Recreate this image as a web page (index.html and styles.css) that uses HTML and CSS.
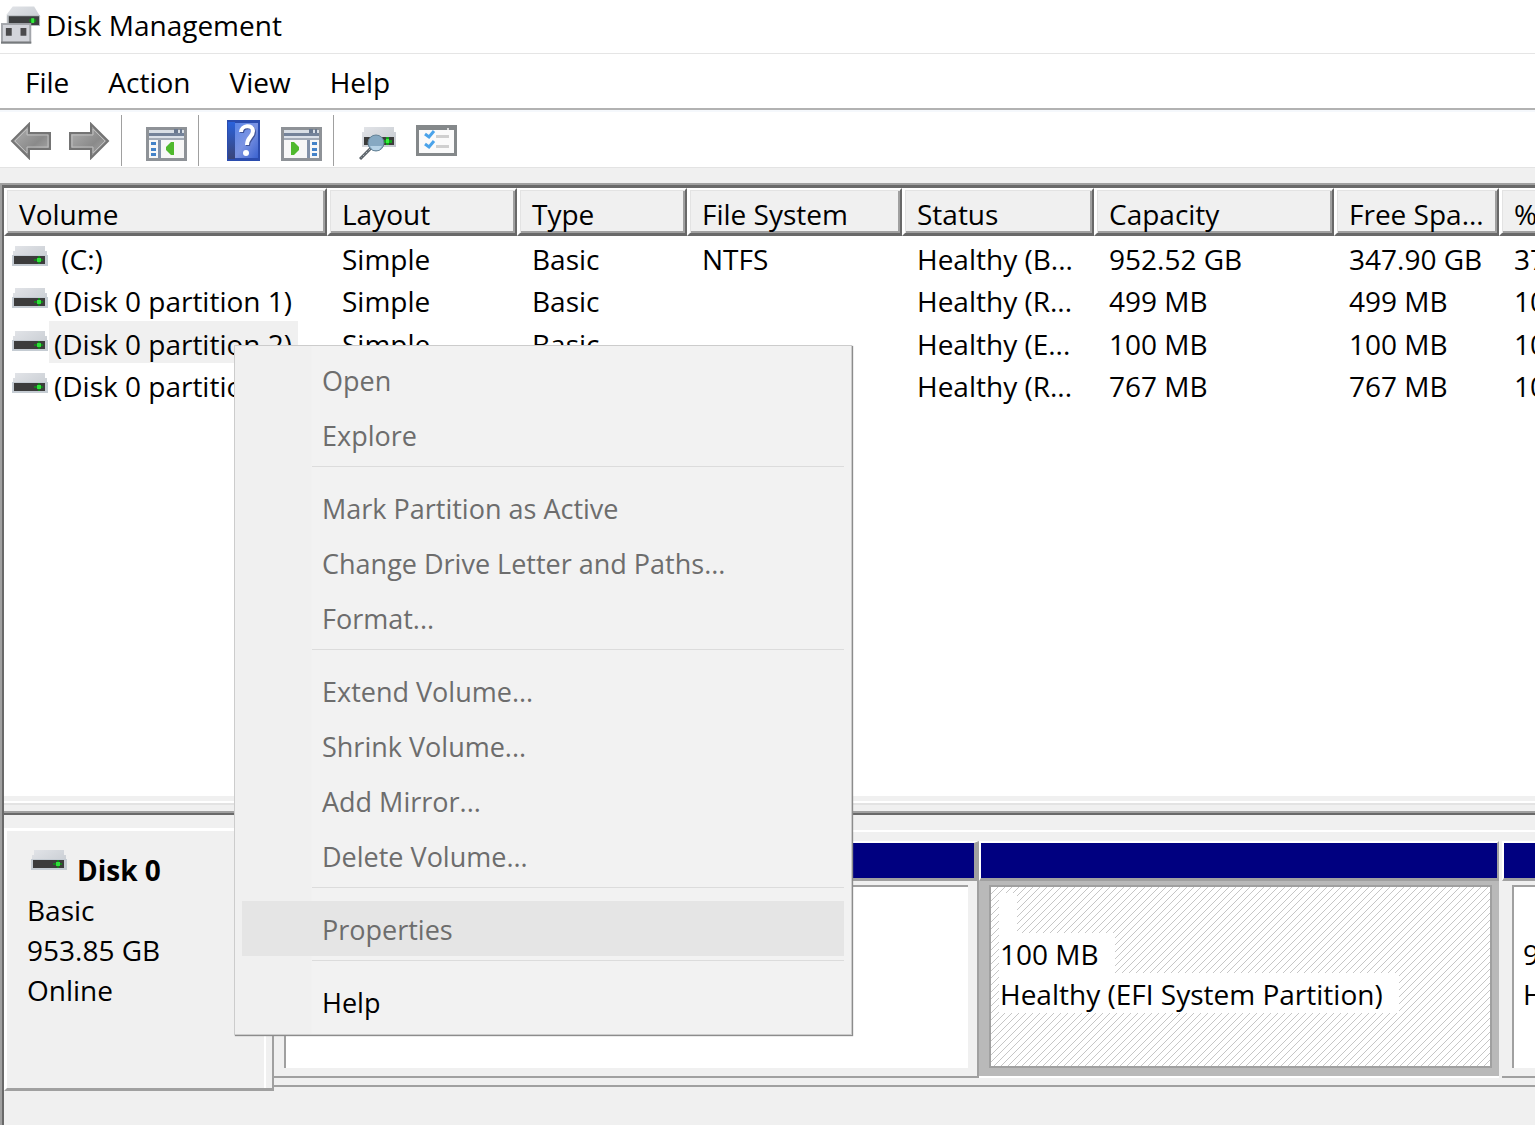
FILE: index.html
```html
<!DOCTYPE html>
<html lang="en">
<head>
  <meta charset="UTF-8" />
  <meta name="viewport" content="width=device-width, initial-scale=1.0" />
  <title>Disk Management</title>
  <link rel="stylesheet" href="styles.css">
</head>
<body>
  <!-- shared icons -->
  <svg class="defs" width="0" height="0">
    <defs>
      <linearGradient id="metal" x1="0" y1="0" x2="1" y2="1">
        <stop offset="0" stop-color="#e2e4e8"/>
        <stop offset="1" stop-color="#c3c8ce"/>
      </linearGradient>
      <linearGradient id="arrow" x1="0" y1="0" x2="1" y2="1">
        <stop offset="0" stop-color="#b4b4b4"/>
        <stop offset="0.6" stop-color="#8a8a8a"/>
        <stop offset="1" stop-color="#b0b0b0"/>
      </linearGradient>
      <linearGradient id="book" x1="0" y1="0" x2="1" y2="1">
        <stop offset="0" stop-color="#5b86e8"/>
        <stop offset="0.5" stop-color="#7b93e2"/>
        <stop offset="1" stop-color="#3a62cf"/>
      </linearGradient>
      <linearGradient id="spine" x1="0" y1="0" x2="0" y2="1">
        <stop offset="0" stop-color="#2a62dc"/>
        <stop offset="1" stop-color="#3a4478"/>
      </linearGradient>
    </defs>
    <symbol id="drive" viewBox="0 0 36 21">
      <path d="M3 0h30v5h2v15H1V5h2z" fill="url(#metal)"/>
      <path d="M0 9h36v11H0z" fill="#c5ccd3"/>
      <path d="M2 10h31v8H2z" fill="#3c3c3c"/>
      <path d="M22 13h9v2h-9z" fill="#14801c"/>
      <path d="M26 10h2v8h-2z" fill="#14801c"/>
      <path d="M25 12h4v4h-4z" fill="#2fe03a"/>
    </symbol>
    <symbol id="window" viewBox="0 0 41 34">
      <path d="M0 0h41v34H0z" fill="#8e9297"/>
      <path d="M3 3h35v3H3z" fill="#d9dfe6"/>
      <path d="M28 2h4v4h-4zM34 2h2v4h-2z" fill="#69788f"/>
      <path d="M3 6h35v3H3z" fill="#74839a"/>
      <path d="M3 9h35v2H3z" fill="#dce2ea"/>
      <path d="M3 11h35v2H3z" fill="#a3abb7"/>
      <path d="M3 13h35v18H3z" fill="#f7f7f7"/>
    </symbol>
  </svg>

  <header class="titlebar">
    <svg class="app-icon" viewBox="0 0 41 38">
      <path d="M12 0h22l6 10v9H6V8z" fill="url(#metal)"/>
      <path d="M6 9h34v11H6z" fill="#b8bcc0"/>
      <path d="M8 10h31v9H8z" fill="#3d3f40"/>
      <path d="M29 13h7v3h-7z" fill="#14801c"/>
      <path d="M31 12h3v5h-3z" fill="#35e83d"/>
      <path d="M0 17h31v21H0z" fill="#a3a6ab"/>
      <path d="M2 19h27v17H2z" fill="#d2d4da"/>
      <path d="M5 22h6v8H5zM20 22h6v8h-6z" fill="#4a4a4c"/>
      <path d="M0 36h31v2H0z" fill="#777a7d"/>
    </svg>
    <h1>Disk Management</h1>
  </header>

  <nav class="menubar">
    <button type="button">File</button>
    <button type="button">Action</button>
    <button type="button">View</button>
    <button type="button">Help</button>
  </nav>

  <div class="toolbar">
    <button type="button" aria-label="Back">
      <svg width="42" height="38" viewBox="0 0 42 38">
        <path d="M2 19L19 2v9h21v16H19v9z" fill="url(#arrow)" stroke="#747474" stroke-width="2"/>
        <path d="M5 19L17 7v6h21v12H17v6z" fill="none" stroke="#bdbdbd" stroke-width="1"/>
      </svg>
    </button>
    <button type="button" aria-label="Forward">
      <svg width="42" height="38" viewBox="0 0 42 38">
        <path d="M40 19L23 2v9H2v16h21v9z" fill="url(#arrow)" stroke="#747474" stroke-width="2"/>
        <path d="M37 19L25 7v6H4v12h21v6z" fill="none" stroke="#bdbdbd" stroke-width="1"/>
      </svg>
    </button>
    <span class="divider"></span>
    <button type="button" class="low" aria-label="Show/Hide Console Tree">
      <svg width="41" height="34" viewBox="0 0 41 34">
        <use href="#window" width="41" height="34"/>
        <path d="M12 13h3v18h-3z" fill="#8291a8"/>
        <path d="M5 15h5v3H5zM5 21h5v3H5zM5 26h5v3H5z" fill="#4382c8"/>
        <path d="M28 15v13h-3l-5-5v-3l5-5z" fill="#4fb92d"/>
      </svg>
    </button>
    <span class="divider"></span>
    <button type="button" aria-label="Help">
      <svg width="33" height="41" viewBox="0 0 33 41">
        <path d="M0 0h33v41H0z" fill="#2b4cae"/>
        <path d="M1 2h7v37H1z" fill="url(#spine)"/>
        <path d="M8 3h23v35H8z" fill="url(#book)"/>
        <path d="M14 12c0-7 12-8 12-1 0 6-6 6-6 14" fill="none" stroke="#405397" stroke-width="4" transform="translate(1 1)"/>
        <path d="M14 12c0-7 12-8 12-1 0 6-6 6-6 14" fill="none" stroke="#fff" stroke-width="4"/>
        <circle cx="19" cy="33" r="3" fill="#fff"/>
      </svg>
    </button>
    <button type="button" class="low" aria-label="Show/Hide Action Pane">
      <svg width="41" height="34" viewBox="0 0 41 34">
        <use href="#window" width="41" height="34"/>
        <path d="M26 13h3v18h-3z" fill="#8291a8"/>
        <path d="M31 15h5v3h-5zM31 21h5v3h-5zM31 26h5v3h-5z" fill="#4382c8"/>
        <path d="M10 15v13h3l5-5v-3l-5-5z" fill="#4fb92d"/>
      </svg>
    </button>
    <span class="divider"></span>
    <button type="button" class="low" aria-label="Rescan Disks">
      <svg width="38" height="34" viewBox="0 0 38 34">
        <path d="M5 0h30v5h2v15H3V5h2z" fill="url(#metal)"/>
        <path d="M5 10h30v8H5z" fill="#3c3c3c"/>
        <path d="M24 13h9v3h-9zM27 10h3v8h-3z" fill="#14a01c"/>
        <path d="M27 12h3v4h-3z" fill="#35f03d"/>
        <path d="M12 21L1 32" stroke="#5b6268" stroke-width="3"/>
        <path d="M11 22L2 31" stroke="#b5bcc2" stroke-width="1" stroke-dasharray="2 2"/>
        <circle cx="17" cy="16" r="8" fill="#86a9c2" stroke="#658397" stroke-width="1"/>
        <path d="M11 19h12l-3 4h-6z" fill="#b6d3e6"/>
      </svg>
    </button>
    <button type="button" aria-label="Settings">
      <svg width="41" height="31" viewBox="0 0 41 31">
        <path d="M0 0h41v31H0z" fill="#84888a"/>
        <path d="M3 5h35v23H3z" fill="#fafafa"/>
        <path d="M31 3h2v2h-2z" fill="#ddd"/>
        <path d="M9 9l4 3 5-6M9 19l4 3 5-6" fill="none" stroke="#4aa3ea" stroke-width="3"/>
        <path d="M20 10h13v3H20zM20 20h13v3H20z" fill="#cfcfcf"/>
      </svg>
    </button>
  </div>

  <main class="console">
    <section class="volume-list">
      <table>
        <colgroup>
          <col class="c-volume"><col class="c-layout"><col class="c-type"><col class="c-fs">
          <col class="c-status"><col class="c-capacity"><col class="c-free"><col class="c-pct">
        </colgroup>
        <thead>
          <tr>
            <th>Volume</th><th>Layout</th><th>Type</th><th>File System</th>
            <th>Status</th><th>Capacity</th><th>Free Spa...</th><th>% Free</th>
          </tr>
        </thead>
        <tbody>
          <tr>
            <td><div class="name"><svg class="drive"><use href="#drive"/></svg><span>&nbsp;(C:)</span></div></td>
            <td>Simple</td><td>Basic</td><td>NTFS</td><td>Healthy (B...</td><td>952.52 GB</td><td>347.90 GB</td><td>37 %</td>
          </tr>
          <tr>
            <td><div class="name"><svg class="drive"><use href="#drive"/></svg><span>(Disk 0 partition 1)</span></div></td>
            <td>Simple</td><td>Basic</td><td></td><td>Healthy (R...</td><td>499 MB</td><td>499 MB</td><td>100 %</td>
          </tr>
          <tr>
            <td><div class="name"><svg class="drive"><use href="#drive"/></svg><span class="selected">(Disk 0 partition 2)</span></div></td>
            <td>Simple</td><td>Basic</td><td></td><td>Healthy (E...</td><td>100 MB</td><td>100 MB</td><td>100 %</td>
          </tr>
          <tr>
            <td><div class="name"><svg class="drive"><use href="#drive"/></svg><span>(Disk 0 partition 5)</span></div></td>
            <td>Simple</td><td>Basic</td><td></td><td>Healthy (R...</td><td>767 MB</td><td>767 MB</td><td>100 %</td>
          </tr>
        </tbody>
      </table>
    </section>

    <div class="splitter"></div>

    <section class="disks">
      <div class="disk-info">
        <h2><svg class="drive"><use href="#drive"/></svg>Disk 0</h2>
        <p>Basic</p>
        <p>953.85 GB</p>
        <p>Online</p>
      </div>
      <div class="partitions">
        <div class="partition recovery">
          <div class="stripe"></div>
          <div class="body"><div class="inner"></div></div>
        </div>
        <div class="partition efi">
          <div class="stripe"></div>
          <div class="body"><div class="inner">
            <p><span></span></p>
            <p><span>100 MB</span></p>
            <p><span>Healthy (EFI System Partition)</span></p>
          </div></div>
        </div>
        <div class="partition system">
          <div class="stripe"></div>
          <div class="body"><div class="inner">
            <p><span></span></p>
            <p><span>952.52 GB NTFS</span></p>
            <p><span>Healthy (Boot)</span></p>
          </div></div>
        </div>
      </div>
    </section>
  </main>

  <div class="context-menu">
    <button type="button" disabled>Open</button>
    <button type="button" disabled>Explore</button>
    <hr>
    <button type="button" disabled>Mark Partition as Active</button>
    <button type="button" disabled>Change Drive Letter and Paths...</button>
    <button type="button" disabled>Format...</button>
    <hr>
    <button type="button" disabled>Extend Volume...</button>
    <button type="button" disabled>Shrink Volume...</button>
    <button type="button" disabled>Add Mirror...</button>
    <button type="button" disabled>Delete Volume...</button>
    <hr>
    <button type="button" class="hover" disabled>Properties</button>
    <hr>
    <button type="button">Help</button>
  </div>
</body>
</html>
```

FILE: styles.css
```css
* {
  box-sizing: border-box;
}
body {
  margin: 0;
  height: 100vh;
  display: flex;
  flex-direction: column;
  overflow: hidden;
  background: #f0f0f0;
  color: #000;
  font-family: "Segoe UI", "Open Sans", "Noto Sans", sans-serif;
  font-size: 28px;
  line-height: 40px;
}
h1, h2, p {
  margin: 0;
  font-size: 28px;
}
button {
  border: 0;
  padding: 0;
  background: none;
  color: inherit;
  font: inherit;
}
.defs {
  position: absolute;
}

/* Title, menu and tool bars */
.titlebar {
  display: flex;
  align-items: center;
  height: 54px;
  padding: 0 0 4px 1px;
  background: #fff;
  border-bottom: 1px solid #e5e5e5;
}
.titlebar h1 {
  padding-left: 5px;
  font-weight: normal;
}
.app-icon {
  width: 40px;
  height: 38px;
}
.menubar {
  display: flex;
  gap: 39px;
  height: 56px;
  padding: 2px 25px 0;
  background: #fff;
  border-bottom: 2px solid #b2b2b2;
}
.toolbar {
  display: flex;
  height: 58px;
  padding-left: 2px;
  background: #fff;
  border-top: 2px solid #f5f8fc;
  border-bottom: 1px solid #e3e3e3;
}
.toolbar button {
  display: flex;
  align-items: center;
  justify-content: center;
  width: 58px;
  padding-top: 2px;
}
.toolbar .low {
  padding-top: 8px;
}
.divider {
  width: 1px;
  margin: 3px 15px 1px 3px;
  background: #a0a0a0;
}

/* Volume list */
.console {
  flex: 1;
  min-height: 0;
  display: flex;
  flex-direction: column;
  margin-top: 15px;
  border-left: 2px solid #a0a0a0;
  border-top: 2px solid #a0a0a0;
  overflow: hidden;
}
.volume-list {
  flex: 1;
  min-height: 0;
  overflow: hidden;
  background: #fff;
  border-left: 2px solid #696969;
  border-top: 3px solid #696969;
}
table {
  width: 1635px;
  table-layout: fixed;
  border-collapse: separate;
  border-spacing: 0;
}
.c-volume { width: 323px; }
.c-layout { width: 190px; }
.c-type { width: 170px; }
.c-fs { width: 215px; }
.c-status { width: 192px; }
.c-capacity { width: 240px; }
.c-free { width: 165px; }
th, td {
  text-align: left;
  font-weight: normal;
  white-space: nowrap;
}
th {
  height: 48px;
  padding: 6px 0 0 12px;
  background: #f0f0f0;
  border: solid;
  border-width: 2px 2px 3px 3px;
  border-color: #fff #696969 #696969 #fff;
  box-shadow: inset 1px 1px #e3e3e3, inset -2px -2px #a0a0a0;
  line-height: 37px;
}
td {
  height: 42px;
  padding: 4px 0 0 15px;
  line-height: 38px;
  vertical-align: top;
}
tr:nth-child(even) td {
  height: 43px;
}
td:first-child {
  padding: 0 0 0 8px;
}
.drive {
  width: 36px;
  height: 21px;
}
.name {
  display: flex;
}
.name .drive {
  margin-top: 10px;
}
.name span {
  margin-left: 1px;
  padding: 4px 6px 0 5px;
}
.name .selected {
  background: #f0f0f0;
}

.splitter {
  height: 19px;
  border-left: 2px solid #696969;
  border-bottom: 2px solid #696969;
  background: linear-gradient(#f0f0f0 5px, #fff 5px, #fff 7px, #e3e3e3 7px, #e3e3e3 9px, #f0f0f0 9px, #f0f0f0 15px, #a0a0a0 15px);
}

/* Graphical disk view */
.disks {
  display: flex;
  padding: 13px 0 34px;
  border-left: 2px solid #696969;
}
.disk-info {
  flex: none;
  width: 270px;
  height: 263px;
  padding: 19px 20px;
  border: solid;
  border-width: 3px 2px 3px 3px;
  border-color: #fff #a0a0a0 #a0a0a0 #fff;
  box-shadow: inset -6px 0 #f0f0f0, inset -8px 0 #fff;
}
.disk-info h2 {
  display: flex;
  gap: 10px;
  padding-left: 4px;
}
.partitions {
  flex: 1;
  min-width: 0;
  display: flex;
  height: 257px;
  margin-top: 2px;
  padding-top: 9px;
  border-top: 2px solid #fff;
  border-bottom: 2px solid #a0a0a0;
  overflow: hidden;
}
.partition {
  flex: none;
  display: flex;
  flex-direction: column;
  height: 237px;
}
.stripe {
  height: 40px;
  background: #000080;
  border: solid;
  border-width: 2px 5px 3px 2px;
  border-color: #fff #a0a0a0 #a0a0a0 #fff;
}
.body {
  flex: 1;
  padding: 4px 9px 8px 10px;
  border-right: 2px solid #a0a0a0;
  border-bottom: 2px solid #a0a0a0;
}
.inner {
  height: 100%;
  padding: 6px 8px;
  background: #fff;
  border-top: 2px solid #a0a0a0;
  border-left: 2px solid #a0a0a0;
  line-height: 42px;
  white-space: nowrap;
  overflow: hidden;
}
.inner span {
  display: inline-block;
  height: 40px;
  padding: 0 16px 0 1px;
  background: #fff;
  vertical-align: top;
}
.inner p {
  height: 40px;
}
.recovery {
  width: 705px;
}
.efi {
  width: 520px;
}
.efi .stripe {
  border-right-width: 2px;
}
.efi .body {
  padding-right: 7px;
  background: #b9b9b9;
  border-right: 0;
  border-bottom: 2px solid #fff;
}
.efi .inner {
  border: 2px solid #a0a0a0;
  background: linear-gradient(135deg, #fff 43%, #c6c6c6 43%, #c6c6c6 57%, #fff 57%);
  background-size: 7px 7px;
}
.efi span:empty {
  width: 18px;
}
.system {
  width: 1100px;
  margin-left: 3px;
}

/* Context menu */
.context-menu {
  position: absolute;
  left: 234px;
  top: 345px;
  width: 618px;
  padding: 6px 7px 5px;
  background: linear-gradient(to right, #f0f0f0 76px, #f2f2f2 77px);
  border: 1px solid #ccc;
  box-shadow: 1px 1px 1px #8c8c8c;
  font-size: 27px;
}
.context-menu button {
  display: block;
  width: 100%;
  height: 55px;
  padding: 2px 0 0 80px;
  text-align: left;
}
.context-menu button:disabled {
  color: #6d6d6d;
}
.context-menu .hover {
  background: #e5e5e5;
}
.context-menu hr {
  height: 1px;
  margin: 4px 0 13px 70px;
  border: 0;
  background: #dcdcdc;
}
```
